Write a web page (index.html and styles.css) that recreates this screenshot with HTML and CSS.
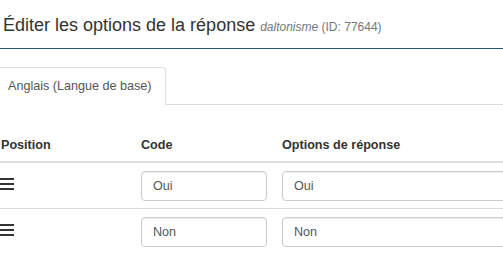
FILE: index.html
```html
<!doctype html>
<html>
<head>
  <meta charset='UTF-8'>
  <title>Éditer les options de la réponse</title>
  <link rel="stylesheet" href="styles.css">
</head>
<body>
  <h1 class='title'>Éditer les options de la réponse <small><em>daltonisme</em> (ID: 77644)</small></h1>
  <ul class='tabs'>
    <li class='tab active'>Anglais (Langue de base)</li>
  </ul>
  <div class='answers'>
    <div class='head'>Position</div>
    <div class='head'>Code</div>
    <div class='head'>Options de réponse</div>

    <div class='cell'><span class='handle'></span></div>
    <div class='cell'><input class='field' type='text' value='Oui'></div>
    <div class='cell'><input class='field' type='text' value='Oui'></div>

    <div class='cell'><span class='handle'></span></div>
    <div class='cell'><input class='field' type='text' value='Non'></div>
    <div class='cell'><input class='field' type='text' value='Non'></div>
  </div>
</body>
</html>
```

FILE: styles.css
```css
body {
  margin: 0;
  background: #fff;
  color: #333;
  font: 12.6px/18px "Liberation Sans", Arial, sans-serif;
  overflow: hidden
}
.title {
  margin: 0 0 18px;
  padding: 14px 0 10px 3px;
  font-size: 18px;
  font-weight: normal;
  line-height: 22px;
  color: #333;
  border-bottom: 1px solid #245685
}
.title small {
  font-size: 12px;
  color: #777
}
.tabs {
  list-style: none;
  margin: 0;
  padding: 0;
  display: flex;
  border-bottom: 1px solid #ddd
}
.tab {
  margin-bottom: -1px;
  padding: 9px 13px 9px 8px;
  color: #555;
  border: 1px solid transparent;
  border-left: 0;
  border-radius: 0 4px 0 0
}
.tab.active {
  background: #fff;
  border-color: #ddd;
  border-bottom-color: transparent
}
.answers {
  display: grid;
  grid-template-columns: 133px 141px 1fr;
  margin-top: 22px
}
.head {
  padding: 9px 8px 7px;
  font-weight: bold;
  border-bottom: 2px solid #ddd
}
.cell {
  padding: 8px 8px 7px;
  border-bottom: 1px solid #ddd;
  display: flex;
  align-items: center;
  overflow: hidden
}
.answers > :nth-child(3n+1) { padding-left: 1px }
.answers > .cell:nth-last-child(-n+3) { border-bottom: 0 }
.handle {
  display: block;
  width: 14px;
  height: 2px;
  margin: -4px 0 0 -1px;
  background: #333;
  box-shadow: 0 -5px 0 #333, 0 5px 0 #333
}
.field {
  box-sizing: border-box;
  flex: none;
  width: 126px;
  height: 30px;
  padding: 6px 11px;
  font: inherit;
  color: #555;
  border: 1px solid #ccc;
  border-radius: 4px;
  box-shadow: inset 0 1px 1px rgba(0,0,0,.075)
}
.answers > .cell:nth-child(3n) .field { width: calc(100% + 20px) }
```
